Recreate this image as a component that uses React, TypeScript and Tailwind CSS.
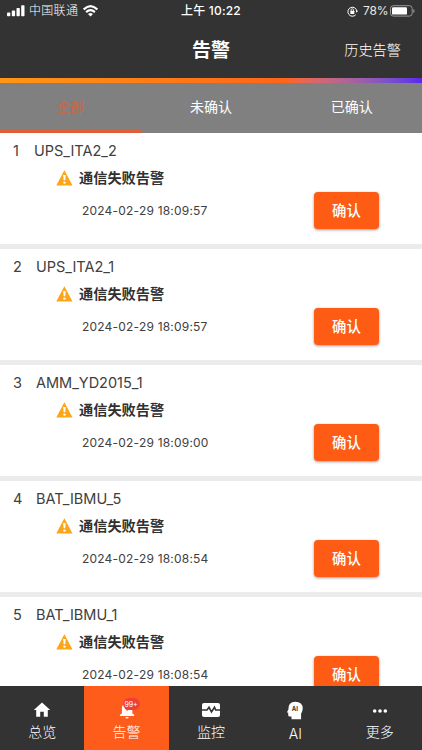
import React from "react";

const alarms = [
  { device: "UPS_ITA2_2", time: "2024-02-29 18:09:57", indent: "w-[21px]" },
  { device: "UPS_ITA2_1", time: "2024-02-29 18:09:57", indent: "w-[23px]" },
  { device: "AMM_YD2015_1", time: "2024-02-29 18:09:00", indent: "w-[23px]" },
  { device: "BAT_IBMU_5", time: "2024-02-29 18:08:54", indent: "w-[23px]" },
  { device: "BAT_IBMU_1", time: "2024-02-29 18:08:54", indent: "w-[23px]" },
];

function StatusBar() {
  return (
    <div className="flex h-[22px] shrink-0 items-center pl-[7px] text-[12px] leading-[22px]">
      <svg className="mr-[4px] mt-[-1px] h-[12px] w-[18px]" viewBox="0 0 18 12" fill="#fff">
        <rect x="0" y="7.6" width="3.3" height="3.6" rx=".8" />
        <rect x="4.8" y="5.6" width="3.3" height="5.6" rx=".8" />
        <rect x="9.5" y="3" width="3.3" height="8.2" rx=".8" />
        <rect x="14.2" y="0.2" width="3.3" height="11" rx=".8" />
      </svg>
      <span className="w-[49px] whitespace-nowrap font-light tracking-[0.3px]">中国联通</span>
      <svg className="ml-[5px] h-[12px] w-[15px]" viewBox="0 0 15 12" fill="none">
        <path d="M.7 4.4Q7.5-2 14.3 4.4" stroke="#fff" strokeWidth="2.2" />
        <path d="M3.1 7.1Q7.5 3.2 11.9 7.1" stroke="#fff" strokeWidth="2.1" />
        <path d="M5 9Q7.5 6.8 10 9L7.5 11.5Z" fill="#fff" />
      </svg>
      <span className="ml-[83px] w-[62px] whitespace-nowrap font-medium tracking-[0.2px]">上午 10:22</span>
      <svg className="ml-[104px] h-[11px] w-[11px]" viewBox="0 0 11 11" fill="none">
        <path d="M9.9 5.3A4.5 4.5 0 1 0 8.8 8.7" stroke="#fff" strokeWidth="1" />
        <path d="M8.6 4.8h2.3L9.8 6.7Z" fill="#fff" />
        <rect x="3.3" y="4.8" width="4" height="3.2" rx=".4" fill="#fff" />
        <path d="M4.1 5V3.9a1.2 1.2 0 0 1 2.4 0V5" stroke="#fff" strokeWidth=".8" />
      </svg>
      <span className="ml-[5px] w-[26px] whitespace-nowrap tracking-[-0.2px] text-[#e8e8e8]">78%</span>
      <svg className="ml-[1px] h-[12px] w-[25px]" viewBox="0 0 25 12" fill="none">
        <rect x=".5" y=".7" width="21.7" height="10.4" rx="2.8" stroke="#999" />
        <rect x="2" y="2.2" width="15" height="7.4" rx="1.2" fill="#fff" />
        <path d="M23.3 4v4q1.3-.5 1.3-2t-1.3-2" fill="#999" />
      </svg>
    </div>
  );
}

function AlarmRow({ index, alarm }: { index: number; alarm: (typeof alarms)[number] }) {
  return (
    <div className="h-[116px] shrink-0 border-b-[5px] border-[#ebebeb] bg-white text-[#404040]">
      <div className="flex h-[36px] items-center pl-[13px] text-[14.5px]">
        <span className={alarm.indent}>{index}</span>
        <span>{alarm.device}</span>
      </div>
      <div className="flex h-[18px] items-center pl-[56px] text-[#303030]">
        <svg className="mr-[6px] h-[16px] w-[17px]" viewBox="0 0 17 16">
          <path d="M8.4 .3 16.5 15.5H.3Z" fill="#fba51b" />
          <path d="M7.2 5h2.5l-.4 5.3H7.6Z" fill="#fff" />
          <circle cx="8.45" cy="12.6" r="1.2" fill="#fff" />
        </svg>
        <span className="text-[14.2px] font-bold">通信失败告警</span>
      </div>
      <div className="flex h-[47px] items-center pl-[82px]">
        <span className="w-[232px] pt-px text-[12px] tracking-[0.2px]">{alarm.time}</span>
        <button className="h-[37px] w-[65px] rounded-[4px] bg-[#fe5c15] pt-px text-[14.4px] font-medium text-white shadow-[0_1px_3px_rgba(0,0,0,0.4)]">确认</button>
      </div>
    </div>
  );
}

function HomeIcon() {
  return <svg className="h-[18px] w-[18px]" viewBox="0 0 18 18" fill="#fff"><path d="M9 1.5.8 9h2.4v6.8h4v-5h3.6v5h4V9h2.4Z" /></svg>;
}

function BellIcon() {
  return (
    <div className="relative h-[18px] w-[18px]">
      <svg className="h-[18px] w-[18px]" viewBox="0 0 18 18" fill="#fff">
        <path d="M3.9 12.5V7.5Q3.9 3.5 7.5 2.4 7.7 1 9 1t1.5 1.4q3.8 1.1 3.8 5.1v5l1.9 1.3V15H1.9v-1.2ZM7.2 15.9h3.6Q10.5 17.4 9 17.4t-1.8-1.5Z" />
        <path d="M6.8 7.5 9 10l2.6-2.5Z" fill="#fe5c1b" />
      </svg>
      <span className="absolute left-[5px] top-[-3px] flex h-[12px] w-[17px] items-center justify-center rounded-full bg-[#ef4038] text-[7px] leading-none">99+</span>
    </div>
  );
}

function MonitorIcon() {
  return <svg className="h-[18px] w-[18px]" viewBox="0 0 18 18"><rect y="2" width="18" height="14" rx="2" fill="#fff" /><path d="M0 9h5l2-2.7 2.5 4.7 3-4.7L13.7 9H18" fill="none" stroke="#333" strokeWidth="1.6" /></svg>;
}

function AiIcon() {
  return (
    <svg className="h-[20px] w-[18px]" viewBox="0 0 18 20">
      <path d="M5.5 18.3v-2.8H3.7q-1.5 0-1.5-1.5v-2.4H.8l1.6-3.2Q2.2 1 9.2.8q7.5.2 7.5 6.7 0 3-1.6 5.2v5.6Z" fill="#fff" />
      <text x="5.8" y="9.8" fontSize="6" fontWeight="bold" fontFamily="Inter, sans-serif" fill="#333">AI</text>
    </svg>
  );
}

function MoreIcon() {
  return <svg className="h-[18px] w-[18px]" viewBox="0 0 18 18" fill="#fff"><circle cx="3.7" cy="10" r="1.8" /><circle cx="9" cy="10" r="1.8" /><circle cx="14.3" cy="10" r="1.8" /></svg>;
}

const navigation = [
  { label: "总览", icon: HomeIcon },
  { label: "告警", icon: BellIcon },
  { label: "监控", icon: MonitorIcon },
  { label: "AI", icon: AiIcon },
  { label: "更多", icon: MoreIcon },
];

export default function App() {
  return (
    <div className="flex h-[750px] w-[422px] flex-col overflow-hidden bg-white font-['Inter','Noto_Sans_CJK_SC',sans-serif]">
      <header className="flex h-[78px] shrink-0 flex-col bg-[#333] text-white">
        <StatusBar />
        <div className="grid h-[56px] grid-cols-3 items-center">
          <span />
          <h1 className="pt-[2px] text-center text-[19px] font-bold">告警</h1>
          <span className="pr-[21px] text-right text-[14.2px] font-light">历史告警</span>
        </div>
      </header>
      <div className="h-[5px] shrink-0 bg-linear-to-r from-[#ff9614] from-0% via-[#ff6418] via-68% to-[#5b24ed] to-100%" />
      <nav className="grid h-[50px] shrink-0 grid-cols-3 bg-[#808080] text-center text-[14px] leading-[47px] text-white">
        <span className="border-b-[3px] border-[#de5f36] font-medium text-[#c06a50]">全部</span>
        <span>未确认</span>
        <span>已确认</span>
      </nav>
      <main className="flex min-h-0 flex-1 flex-col overflow-hidden">
        {alarms.map((alarm, i) => <AlarmRow key={i} index={i + 1} alarm={alarm} />)}
      </main>
      <footer className="grid h-[64px] shrink-0 grid-cols-5 bg-[#333] text-white">
        {navigation.map(({ label, icon: Icon }, i) => (
          <div key={label} className={`flex flex-col items-center pt-[15px] ${i === 1 ? "bg-[#fe5c1b]" : ""}`}>
            <Icon />
            <span className="mt-[2px] text-[14px] font-light leading-[22px]">{label}</span>
          </div>
        ))}
      </footer>
    </div>
  );
}
